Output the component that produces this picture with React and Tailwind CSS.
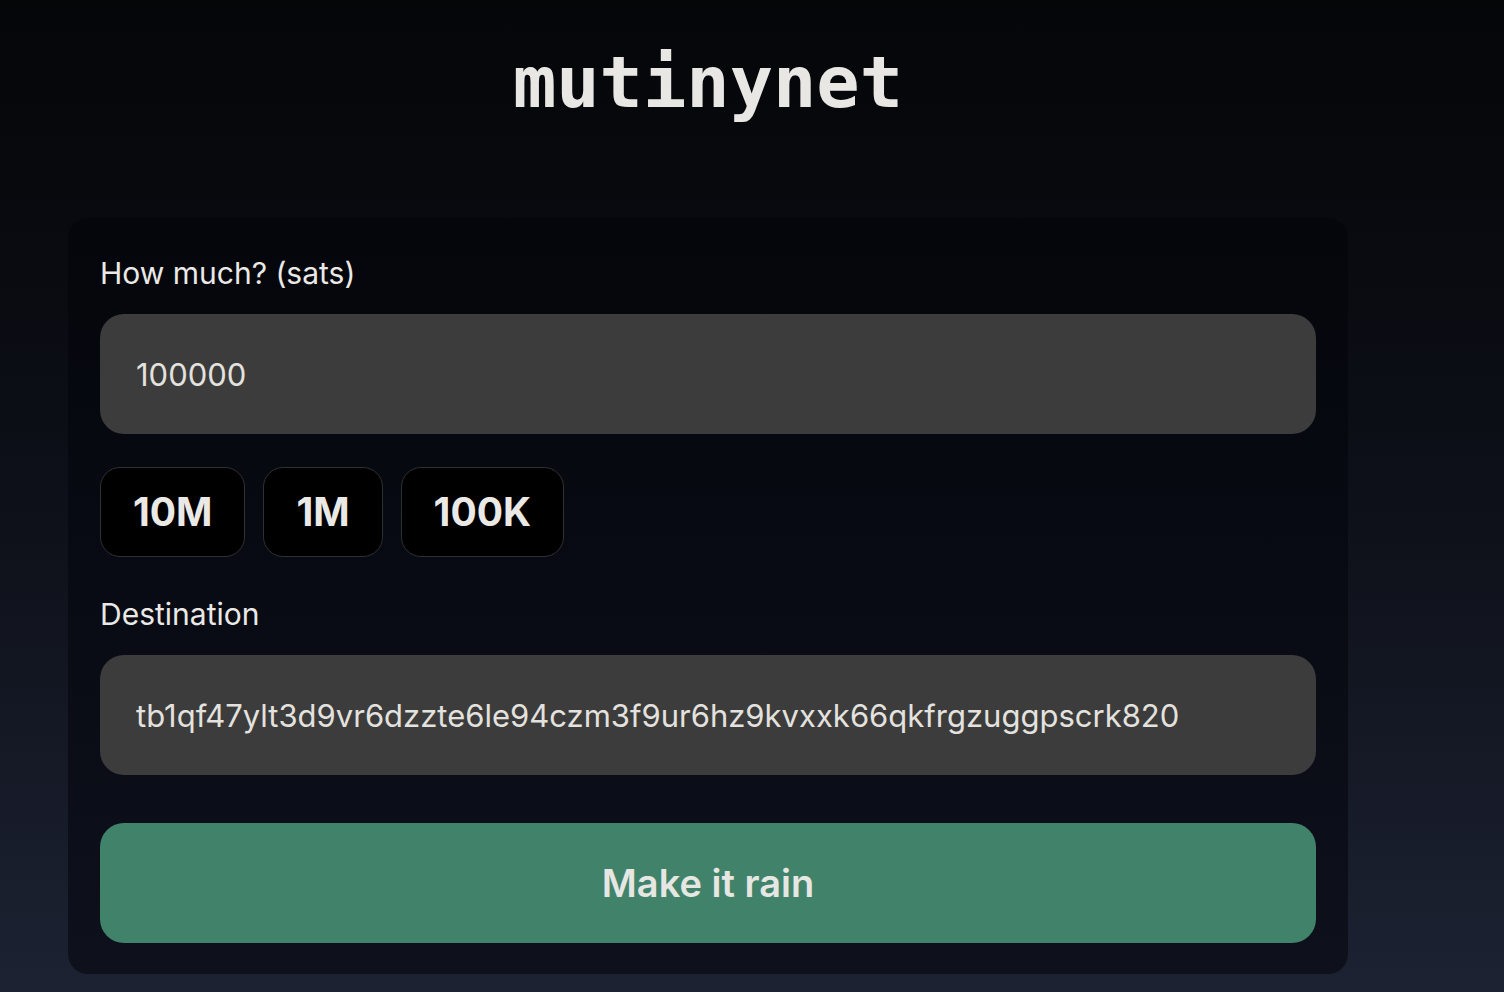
import { useState } from 'react';

const AMOUNTS = [
  { label: '10M', value: '10000000' },
  { label: '1M', value: '1000000' },
  { label: '100K', value: '100000' },
];

export default function App() {
  const [amount, setAmount] = useState('100000');
  const [dest, setDest] = useState('tb1qf47ylt3d9vr6dzzte6le94czm3f9ur6hz9kvxxk66qkfrgzuggpscrk820');

  return (
    <div
      className="min-h-screen w-full bg-gradient-to-b from-[#050608] via-[#0d1018] to-[#1d2233] text-[#e8e6e3]"
      style={{ fontFamily: 'Inter, "Noto Sans", "Liberation Sans", sans-serif' }}
    >
      <div className="ml-[68px] w-[1280px] pt-[37px]">
        <h1
          className="text-center text-[72px] font-bold leading-[90px] text-[#e9e7e4]"
          style={{ fontFamily: '"DejaVu Sans Mono", "Liberation Mono", monospace' }}
        >
          mutinynet
        </h1>

        {/* card */}
        <div className="mt-[91px] rounded-[20px] bg-gradient-to-b from-[#04060b] to-[#0e111c] px-8 pt-[35px] pb-[31px]">
          <label className="block text-[30px] leading-[40px] text-[#ebe9e6]">How much? (sats)</label>
          <input
            value={amount}
            onChange={(e) => setAmount(e.target.value)}
            className="mt-[21px] block h-[120px] w-full rounded-[24px] bg-[#3c3c3c] px-9 text-[31px] text-[#e4e2df] outline-none"
          />

          <div className="mt-[33px] flex gap-[18px]">
            {AMOUNTS.map((a) => (
              <button
                key={a.label}
                onClick={() => setAmount(a.value)}
                className="h-[90px] rounded-[20px] border border-[#2f3032] bg-black px-8 text-[39px] font-bold text-[#ebe9e6]"
              >
                {a.label}
              </button>
            ))}
          </div>

          <label className="mt-[37px] block text-[30px] leading-[40px] text-[#ebe9e6]">Destination</label>
          <input
            value={dest}
            onChange={(e) => setDest(e.target.value)}
            className="mt-[21px] block h-[120px] w-full rounded-[24px] bg-[#3c3c3c] px-9 text-[31px] text-[#e4e2df] outline-none"
          />

          <button className="mt-12 block h-[120px] w-full rounded-[24px] bg-[#41836a] text-[38px] font-semibold text-[#e6e6e3]">
            Make it rain
          </button>
        </div>
      </div>
    </div>
  );
}
